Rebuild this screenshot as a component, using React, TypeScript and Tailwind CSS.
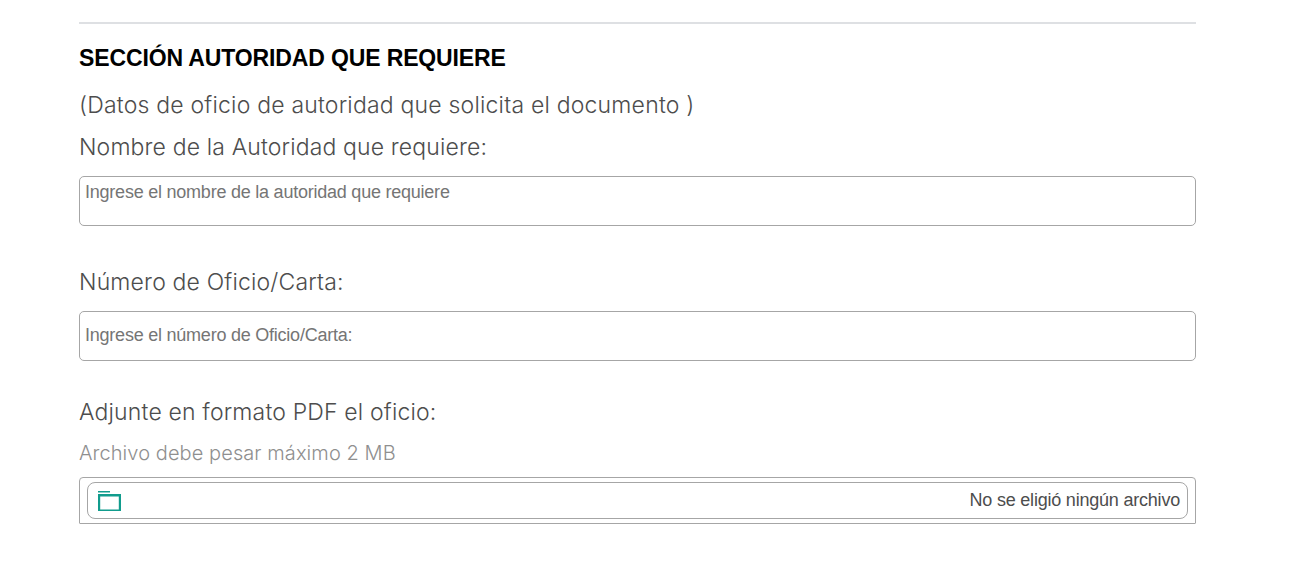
export default function App() {
  return (
    <main className="h-[569px] w-full overflow-hidden bg-white pl-[79px] pr-[111px] pt-[22px] font-['Inter',sans-serif] text-[#4d4d4d]">
      <hr className="border-t-2 border-[#dee0e3]" />
      <h1 className="mt-[16px] h-9 whitespace-nowrap font-['Liberation_Sans',sans-serif] text-[23px] font-bold leading-9 tracking-[-0.13px] text-black">SECCIÓN AUTORIDAD QUE REQUIERE</h1>
      <p className="mt-[11px] h-9 whitespace-nowrap text-[23px] font-light leading-9 tracking-[0.2px]">(Datos de oficio de autoridad que solicita el documento )</p>
      <label htmlFor="authority" className="mt-[6px] block h-9 whitespace-nowrap text-[23px] font-light leading-9 tracking-[0.14px]">Nombre de la Autoridad que requiere:</label>
      <textarea id="authority" placeholder="Ingrese el nombre de la autoridad que requiere" className="mt-[11px] block h-[50px] w-full resize-none rounded-[5px] border border-[#a6a6a6] px-[5px] py-[3px] font-['Liberation_Sans',sans-serif] text-[18px] leading-6 tracking-[-0.23px] placeholder:text-[#757575]" />
      <label htmlFor="number" className="mt-[38px] block h-9 whitespace-nowrap text-[23px] font-light leading-9 tracking-[0.17px]">Número de Oficio/Carta:</label>
      <input id="number" placeholder="Ingrese el número de Oficio/Carta:" className="mt-[11px] block h-[50px] w-full rounded-[5px] border border-[#a6a6a6] px-[5px] pb-[2px] font-['Liberation_Sans',sans-serif] text-[18px] tracking-[-0.23px] placeholder:text-[#757575]" />
      <p className="mt-[33px] h-9 whitespace-nowrap text-[23px] font-light leading-9 tracking-[0.17px]">Adjunte en formato PDF el oficio:</p>
      <p className="mt-[8px] h-[30px] whitespace-nowrap text-[20px] font-light leading-[30px] tracking-[0.08px] text-[#8f8f8f]">Archivo debe pesar máximo 2 MB</p>
      <div className="mt-[9px] h-[47px] rounded-t-[4px] rounded-b-[1px] border border-[#a6a6a6] px-[7px] py-1">
        <button className="flex h-[37px] w-full items-center justify-between rounded-[8px] border border-[#a6a6a6] px-[7px]">
          <svg width="30" height="24" viewBox="0 0 30 24" fill="#119c8d"><path d="M3 2h12v1.5H3z" /><path fillRule="evenodd" d="M3 5h23v17H3zM5.2 7.5v13h18.6v-13z" /></svg>
          <span className="font-['Liberation_Sans',sans-serif] text-[18px] tracking-[-0.21px]">No se eligió ningún archivo</span>
        </button>
      </div>
    </main>
  );
}
